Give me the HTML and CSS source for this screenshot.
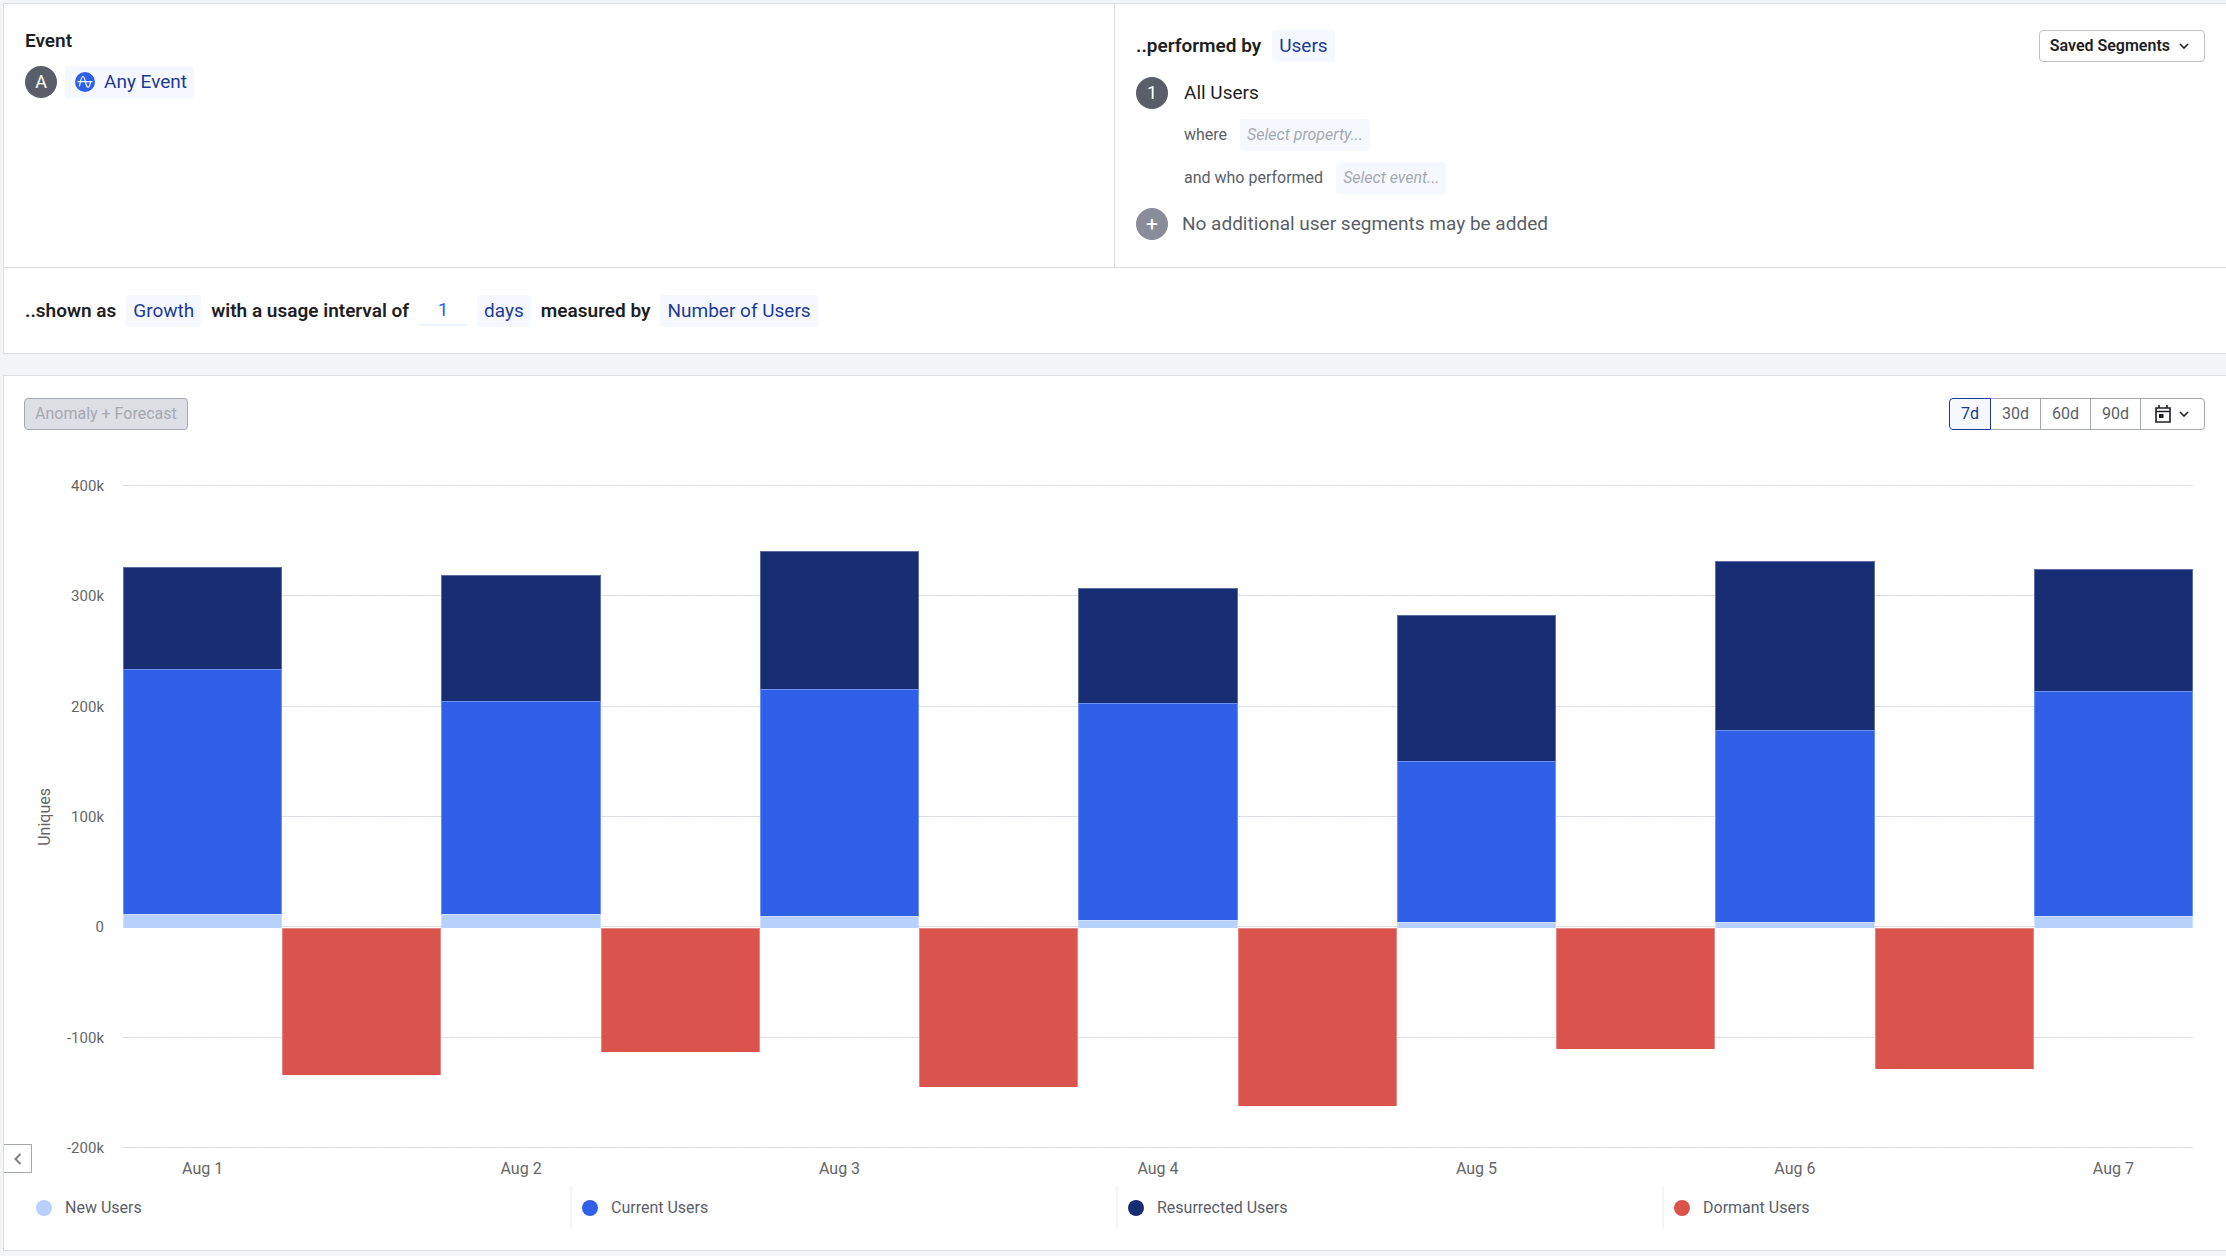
FILE: index.html
```html
<!DOCTYPE html>
<html lang="en">
<head>
<meta charset="utf-8">
<title>Growth</title>
<link rel="stylesheet" href="styles.css">
</head>
<body>
<main class="page">
  <section class="panel query">
    <div class="query-top">
      <div class="query-events">
        <h2 class="heading">Event</h2>
        <div class="event-row">
          <span class="badge">A</span>
          <button class="chip event-chip" type="button">
            <svg class="logo" viewBox="0 0 20 20" aria-hidden="true"><circle cx="10" cy="10" r="10" fill="#2f5fe6"/><path d="M3 9.700h14M4.500 14C5.500 9 6.500 4.500 8 4.500s2.300 5 3 7.500 1.200 3.200 2.200 3.200 1.800-1.700 2.300-5.500" fill="none" stroke="#fff" stroke-width="1.200" stroke-linecap="round"/></svg>
            Any Event
          </button>
        </div>
      </div>
      <div class="query-segments">
        <div class="segments-head">
          <h2 class="heading">..performed by</h2>
          <button class="chip" type="button">Users</button>
          <button class="saved" type="button">Saved Segments
            <svg class="chevron" viewBox="0 0 10 6" aria-hidden="true"><path d="M1 1l4 4 4-4"/></svg>
          </button>
        </div>
        <div class="segment-row"><span class="badge">1</span><span class="segment-name">All Users</span></div>
        <div class="filters">
          <div class="filter-row"><span>where</span><button class="chip placeholder" type="button">Select property...</button></div>
          <div class="filter-row"><span>and who performed</span><button class="chip placeholder" type="button">Select event...</button></div>
        </div>
        <div class="segment-row last"><span class="badge muted">+</span><span class="segment-note">No additional user segments may be added</span></div>
      </div>
    </div>
    <div class="query-bottom">
      <span class="heading">..shown as</span>
      <button class="chip" type="button">Growth</button>
      <label class="heading" for="interval">with a usage interval of</label>
      <input class="interval" id="interval" type="text" value="1">
      <button class="chip" type="button">days</button>
      <span class="heading">measured by</span>
      <button class="chip" type="button">Number of Users</button>
    </div>
  </section>

  <section class="panel results">
    <div class="toolbar">
      <button class="anomaly" type="button" disabled>Anomaly + Forecast</button>
      <div class="ranges">
        <button class="range active" type="button">7d</button>
        <button class="range" type="button">30d</button>
        <button class="range" type="button">60d</button>
        <button class="range" type="button">90d</button>
        <button class="range calendar" type="button" aria-label="Custom range">
          <svg class="cal" viewBox="0 0 16 18" aria-hidden="true"><path d="M1 3h14v14H1zM1 6.500h14M4 0v3M12 0v3" fill="none" stroke="#1e1f24" stroke-width="1.600"/><path d="M4 9h4.500v4H4z" fill="#1e1f24"/></svg>
          <svg class="chevron" viewBox="0 0 10 6" aria-hidden="true"><path d="M1 1l4 4 4-4"/></svg>
        </button>
      </div>
    </div>

    <div class="chart">
      <div class="y-title">Uniques</div>
      <div class="y-axis">
        <span>400k</span><span>300k</span><span>200k</span><span>100k</span><span>0</span><span>-100k</span><span>-200k</span>
      </div>
      <div class="plot">
        <div class="grid"><i></i><i></i><i></i><i></i><i></i><i></i><i></i></div>
        <div class="bars" id="bars"></div>
      </div>
      <div class="x-axis">
        <span>Aug 1</span><span></span><span>Aug 2</span><span></span><span>Aug 3</span><span></span><span>Aug 4</span><span></span><span>Aug 5</span><span></span><span>Aug 6</span><span></span><span>Aug 7</span>
      </div>
    </div>

    <button class="collapse" type="button" aria-label="Collapse">
      <svg class="collapse-icon" viewBox="0 0 8 12" aria-hidden="true"><path d="M6.500 1l-5 5 5 5"/></svg>
    </button>

    <ul class="legend">
      <li><span class="dot new"></span>New Users</li>
      <li><span class="dot current"></span>Current Users</li>
      <li><span class="dot resurrected"></span>Resurrected Users</li>
      <li><span class="dot dormant"></span>Dormant Users</li>
    </ul>
  </section>
</main>
<script src="chart.js"></script>
</body>
</html>
```

FILE: styles.css
```css
* { box-sizing: border-box; }
body {
  margin: 0;
  background: #f3f4f6;
  color: #1e1f24;
  font-family: Roboto, "Liberation Sans", sans-serif;
  font-size: 19px;
  line-height: 24px;
}
button, input { font: inherit; color: inherit; margin: 0; }
button { white-space: nowrap; }
.page { display: flex; flex-direction: column; gap: 21px; padding: 3px 0 5px 3px; }
.panel { position: relative; background: #fff; border: 1px solid #dcdee2; border-right: 0; }
.heading { margin: 0; font-size: 19px; line-height: 24px; font-weight: 600; }

/* Query builder */
.query-top { display: grid; grid-template-columns: 1fr 1fr; border-bottom: 1px solid #dcdee2; }
.query-events { padding: 25px 21px; border-right: 1px solid #dcdee2; }
.event-row { display: flex; align-items: center; gap: 8px; margin-top: 13px; }
.badge {
  display: flex; align-items: center; justify-content: center; flex: none;
  width: 32px; height: 32px; border-radius: 50%;
  background: #5a5e68; color: #fff; font-size: 18px;
}
.badge.muted { background: #8a8d99; font-size: 21px; }
.chip {
  display: inline-flex; align-items: center; height: 32px; padding: 0 7px;
  border: 0; border-radius: 3px; background: #f5f9ff; color: #1e3a96;
}
.event-chip { padding-left: 10px; gap: 9px; }
.logo { width: 20px; height: 20px; }
.query-segments { padding: 26px 21px 27px; }
.segments-head { display: flex; align-items: center; gap: 11px; }
.saved {
  display: flex; align-items: center; gap: 9px; margin-left: auto;
  height: 32px; padding: 0 15px 0 10px; border: 1px solid #bfc1cb; border-radius: 4px;
  background: #fff; font-size: 16px; font-weight: 600;
}
.chevron { width: 10px; height: 6px; fill: none; stroke: #1e1f24; stroke-width: 1.6; }
.segment-row { display: flex; align-items: center; gap: 16px; margin-top: 15px; }
.segment-row.last { gap: 14px; margin-top: 14px; }
.segment-note { color: #5a5e68; }
.filters { display: grid; gap: 11px; margin: 10px 0 0 48px; }
.filter-row { display: flex; align-items: center; gap: 13px; font-size: 16px; color: #5a5e68; }
.placeholder { color: #a5a8b0; font-style: italic; }
.query-bottom { display: flex; align-items: center; gap: 10px; height: 85px; padding: 0 21px; }
.interval {
  width: 48px; height: 30px; padding: 0; border: 0; border-bottom: 2px solid #edf5ff;
  background: none; color: #2f5fe6; text-align: center;
}

/* Results */
.results { padding: 22px 21px 21px 20px; }
.toolbar { display: flex; align-items: center; justify-content: space-between; }
.anomaly {
  height: 32px; padding: 0 10px; border: 1px solid #a5a8b3; border-radius: 4px;
  background: #dedfe4; color: #a5a8b0; font-size: 16px;
}
.ranges { display: flex; }
.range {
  height: 32px; width: 51px; margin-left: -1px; padding: 0; border: 1px solid #a5a8b3;
  background: #fff; color: #5a5e68; font-size: 16px;
}
.range.active { z-index: 1; width: 42px; border-color: #1e3a96; border-radius: 4px 0 0 4px; background: #f5f9ff; color: #1e3a96; }
.calendar { display: flex; align-items: center; justify-content: center; gap: 8px; width: 65px; padding-right: 2px; border-radius: 0 4px 4px 0; }
.cal { width: 16px; height: 18px; }

.chart {
  display: grid; grid-template-columns: 31px 49px 1fr;
  grid-template-rows: 663px 32px; margin: 55px 12px 0 0; color: #666;
}
.y-title { writing-mode: vertical-rl; transform: rotate(180deg); justify-self: end; align-self: center; font-size: 16px; line-height: 20px; }
.y-axis { display: flex; flex-direction: column; justify-content: space-between; margin: -9px 0 -10px; text-align: right; font-size: 15px; line-height: 20px; }
.plot { position: relative; margin-left: 19px; }
.grid { position: absolute; inset: 0; display: flex; flex-direction: column; justify-content: space-between; }
.grid i { height: 1px; background: repeating-linear-gradient(90deg, #cfd4dd 0 1px, #e0e4ea 1px 3px); }
.bars { position: relative; display: grid; grid-template-columns: repeat(13, 1fr); height: 100%; padding-top: 2px; }
.day { display: grid; grid-template-rows: 4fr 2fr; }
.stack { display: flex; flex-direction: column; justify-content: flex-end; }
.drop { grid-row: 2; }
.seg { border: 1px solid rgba(255, 255, 255, .3); border-bottom: 0; }
.new { background: #b8d1fb; }
.current { background: #3060e7; }
.resurrected { background: #182e74; }
.dormant { background: #da534d; }
.x-axis { grid-column: 3; display: grid; grid-template-columns: repeat(13, 1fr); margin-left: 19px; padding-top: 11px; text-align: center; font-size: 16px; line-height: 20px; }

.collapse {
  position: absolute; left: 0; bottom: 77px; width: 28px; height: 29px; padding: 0;
  border: 1px solid #a5a8b3; border-left: 0; background: #fff;
}
.collapse-icon { display: block; width: 8px; height: 12px; margin: auto; fill: none; stroke: #7d808c; stroke-width: 2; }
.legend { display: grid; grid-template-columns: repeat(4, 1fr); margin: 6px -3px 0 0; padding: 0; list-style: none; font-size: 16px; color: #5a5e68; }
.legend li { display: flex; align-items: center; gap: 13px; height: 43px; padding-left: 10px; border-left: 2px solid #f3f4f6; }
.legend li:first-child { border-left-color: transparent; }
.dot { width: 16px; height: 16px; border-radius: 50%; }
```

FILE: chart.js
```js
// Daily totals in thousands of users; dormant users are drawn below zero.
const days = [
  { added: 12, current: 223, resurrected: 92, dormant: 134 },
  { added: 12, current: 194, resurrected: 114, dormant: 113 },
  { added: 11, current: 206, resurrected: 125, dormant: 145 },
  { added: 7, current: 197, resurrected: 104, dormant: 162 },
  { added: 5, current: 146, resurrected: 133, dormant: 110 },
  { added: 5, current: 174, resurrected: 154, dormant: 128 },
  { added: 11, current: 204, resurrected: 111 },
];
const seg = (name, share) => `<div class="seg ${name}" style="height:${share * 100}%"></div>`;
document.getElementById("bars").innerHTML = days.map((d) =>
  `<div class="day"><div class="stack">${seg("resurrected", d.resurrected / 400)}${seg("current", d.current / 400)}${seg("new", d.added / 400)}</div></div>` +
  (d.dormant ? `<div class="day"><div class="drop">${seg("dormant", d.dormant / 200)}</div></div>` : "")
).join("");
```
